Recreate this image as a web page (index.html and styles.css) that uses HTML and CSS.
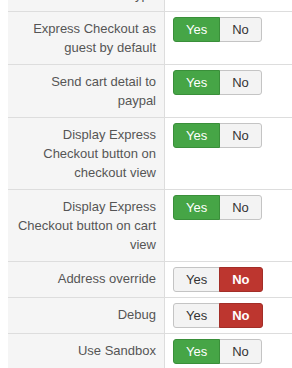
FILE: index.html
```html
<!DOCTYPE html>
<html lang="en">
<head>
    <meta charset="UTF-8">
    <meta name="viewport" content="width=device-width, initial-scale=1.0">
    <title>PayPal Express Checkout | Options</title>
    <link rel="stylesheet" href="styles.css">
</head>
<body>
    <div class="options">
        <div class="row row-cut">
            <div class="label">Express Checkout type</div>
            <div class="field"></div>
        </div>
        <div class="row">
            <div class="label">Express Checkout as guest by default</div>
            <div class="field">
                <div class="yesno">
                    <button class="btn on-yes">Yes</button>
                    <button class="btn">No</button>
                </div>
            </div>
        </div>
        <div class="row">
            <div class="label">Send cart detail to paypal</div>
            <div class="field">
                <div class="yesno">
                    <button class="btn on-yes">Yes</button>
                    <button class="btn">No</button>
                </div>
            </div>
        </div>
        <div class="row">
            <div class="label">Display Express Checkout button on checkout view</div>
            <div class="field">
                <div class="yesno">
                    <button class="btn on-yes">Yes</button>
                    <button class="btn">No</button>
                </div>
            </div>
        </div>
        <div class="row">
            <div class="label">Display Express Checkout button on cart view</div>
            <div class="field">
                <div class="yesno">
                    <button class="btn on-yes">Yes</button>
                    <button class="btn">No</button>
                </div>
            </div>
        </div>
        <div class="row">
            <div class="label">Address override</div>
            <div class="field">
                <div class="yesno">
                    <button class="btn">Yes</button>
                    <button class="btn on-no">No</button>
                </div>
            </div>
        </div>
        <div class="row">
            <div class="label">Debug</div>
            <div class="field">
                <div class="yesno">
                    <button class="btn">Yes</button>
                    <button class="btn on-no">No</button>
                </div>
            </div>
        </div>
        <div class="row row-last">
            <div class="label">Use Sandbox</div>
            <div class="field">
                <div class="yesno">
                    <button class="btn on-yes">Yes</button>
                    <button class="btn">No</button>
                </div>
            </div>
        </div>
    </div>
</body>
</html>
```

FILE: styles.css
```css
* {
    margin: 0;
    padding: 0;
    box-sizing: border-box;
}

body {
    padding-left: 8px;
    background: #fff;
    font-family: "Liberation Sans", Arial, sans-serif;
    font-size: 13px;
    line-height: 19px;
    color: #555;
    overflow: hidden;
}

.row {
    display: grid;
    grid-template-columns: 157px 1fr;
    border-top: 1px solid #ddd;
}

.row-cut {
    margin-top: -41px;
    border-top: none;
}

.row-last {
    border-bottom: 1px solid #ddd;
}

.label {
    background: #f5f5f5;
    border-right: 1px solid #ddd;
    padding: 7px 8px;
    text-align: right;
    color: #555;
}

.row-cut .label {
    padding-left: 60px;
}

.field {
    padding: 5px 8px;
}

.yesno {
    display: flex;
}

.btn {
    font-family: inherit;
    font-size: 13px;
    line-height: 17px;
    padding: 3px 12px;
    border: 1px solid #c4c4c4;
    background: #f3f3f3;
    color: #333;
    cursor: pointer;
}

.btn:first-child {
    border-radius: 3px 0 0 3px;
}

.btn:last-child {
    margin-left: -1px;
    border-radius: 0 3px 3px 0;
}

.btn.on-yes {
    background: #46a546;
    border-color: #3a8f3a;
    color: #fff;
    position: relative;
}

.btn.on-no {
    background: #bd362f;
    border-color: #a32e28;
    color: #fff;
    font-weight: bold;
    position: relative;
}
```
